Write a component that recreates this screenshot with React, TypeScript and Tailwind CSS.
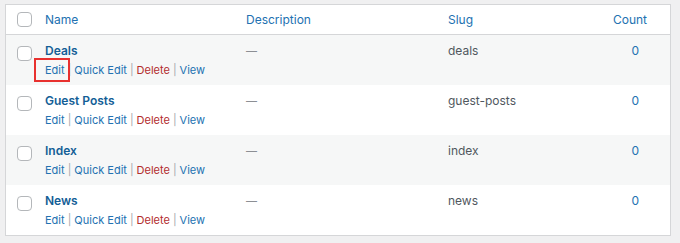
const terms = [
  { name: "Deals", slug: "deals", highlight: true },
  { name: "Guest Posts", slug: "guest-posts" },
  { name: "Index", slug: "index" },
  { name: "News", slug: "news" },
];

function Box() {
  return <span className="block h-[15px] w-[15px] rounded-[4px] border border-[#b4b7ba] bg-white" />;
}

export default function App() {
  return (
    <div className="min-h-[243px] bg-[#f0f0f1] pl-[5px] pr-[9px] pt-[4px] font-['Inter',sans-serif]">
      <div className="border border-[#d5d6d8] bg-white">
        <div className="flex h-[30px] items-center border-b border-[#d5d6d8] text-[12px] text-[#2271b1]">
          <div className="w-[39px] pl-[11px]">
            <Box />
          </div>
          <div className="w-[201px]">Name</div>
          <div className="w-[202px]">Description</div>
          <div className="flex-1">Slug</div>
          <div className="pr-[23px]">Count</div>
        </div>
        {terms.map((t, i) => (
          <div
            key={t.slug}
            className={`flex h-[50px] items-start pt-[8px] ${i % 2 === 0 ? "bg-[#f6f7f7]" : "bg-white"}`}
          >
            <div className="w-[39px] pl-[11px] pt-[3px]">
              <Box />
            </div>
            <div className="w-[201px]">
              <div className="text-[12px] font-semibold leading-[16px] text-[#135e96]">{t.name}</div>
              <div className="mt-[3px] flex items-center text-[11px] leading-[16px] text-[#2271b1]">
                <span className="relative">
                  Edit
                  {t.highlight && (
                    <span className="absolute -left-[11px] -right-[5px] -top-[4px] -bottom-[4px] border-2 border-[#e8312f]" />
                  )}
                </span>
                <span className="mx-[3px] text-[#a7aaad]">|</span>
                <span>Quick Edit</span>
                <span className="mx-[3px] text-[#a7aaad]">|</span>
                <span className="text-[#b32d2e]">Delete</span>
                <span className="mx-[3px] text-[#a7aaad]">|</span>
                <span>View</span>
              </div>
            </div>
            <div className="w-[202px] text-[11px] leading-[16px] text-[#8c8f94]">—</div>
            <div className="flex-1 text-[12px] leading-[16px] text-[#50575e]">{t.slug}</div>
            <div className="pr-[31px] text-[12px] leading-[16px] text-[#2271b1]">0</div>
          </div>
        ))}
      </div>
    </div>
  );
}
